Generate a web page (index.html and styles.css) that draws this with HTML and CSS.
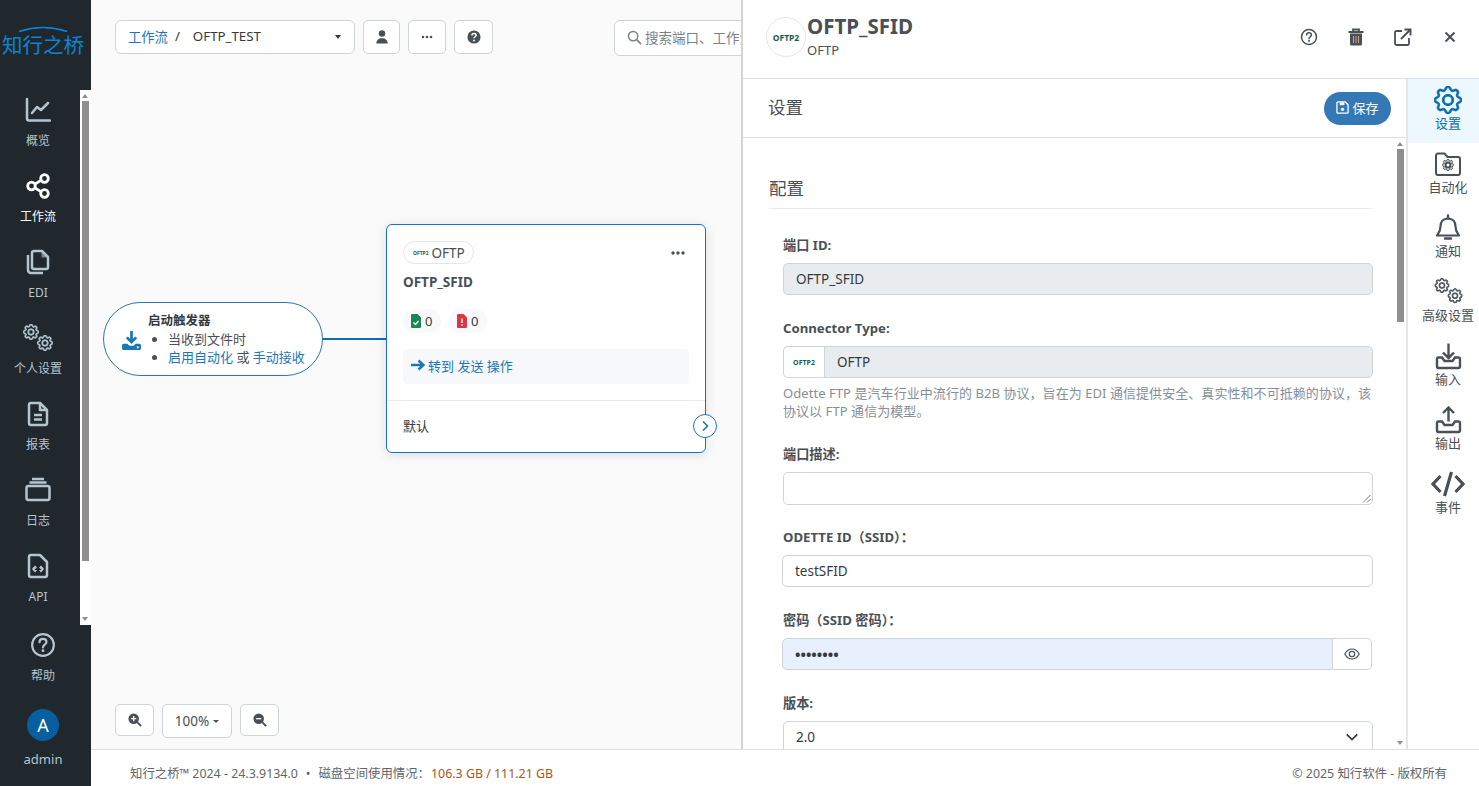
FILE: index.html
```html
<!DOCTYPE html>
<html lang="zh">
<head>
  <meta charset="UTF-8">
  <title>知行之桥 - 工作流</title>
  <link rel="stylesheet" href="styles.css">
</head>
<body>
  <svg class="sprite" xmlns="http://www.w3.org/2000/svg">
    <symbol id="i-gear" viewBox="0 0 16 16">
      <g class="gear-shape" fill="currentColor" stroke="currentColor">
        <path d="M8 4.754a3.246 3.246 0 1 0 0 6.492 3.246 3.246 0 0 0 0-6.492zM5.754 8a2.246 2.246 0 1 1 4.492 0 2.246 2.246 0 0 1-4.492 0z"/>
        <path d="M9.796 1.343c-.527-1.79-3.065-1.79-3.592 0l-.094.319a.873.873 0 0 1-1.255.52l-.292-.16c-1.64-.892-3.433.902-2.54 2.541l.159.292a.873.873 0 0 1-.52 1.255l-.319.094c-1.79.527-1.79 3.065 0 3.592l.319.094a.873.873 0 0 1 .52 1.255l-.16.292c-.892 1.64.901 3.434 2.541 2.54l.292-.159a.873.873 0 0 1 1.255.52l.094.319c.527 1.79 3.065 1.79 3.592 0l.094-.319a.873.873 0 0 1 1.255-.52l.292.16c1.64.893 3.434-.902 2.54-2.541l-.159-.292a.873.873 0 0 1 .52-1.255l.319-.094c1.79-.527 1.79-3.065 0-3.592l-.319-.094a.873.873 0 0 1-.52-1.255l.16-.292c.893-1.64-.902-3.433-2.541-2.54l-.292.159a.873.873 0 0 1-1.255-.52l-.094-.319zm-2.633.283c.246-.835 1.428-.835 1.674 0l.094.319a1.873 1.873 0 0 0 2.693 1.115l.291-.16c.764-.415 1.6.42 1.184 1.185l-.159.292a1.873 1.873 0 0 0 1.116 2.692l.318.094c.835.246.835 1.428 0 1.674l-.319.094a1.873 1.873 0 0 0-1.115 2.693l.16.291c.415.764-.42 1.6-1.185 1.184l-.291-.159a1.873 1.873 0 0 0-2.693 1.116l-.094.318c-.246.835-1.428.835-1.674 0l-.094-.319a1.873 1.873 0 0 0-2.692-1.115l-.292.16c-.764.415-1.6-.42-1.184-1.185l.159-.291A1.873 1.873 0 0 0 1.945 8.93l-.319-.094c-.835-.246-.835-1.428 0-1.674l.319-.094A1.873 1.873 0 0 0 3.06 4.377l-.16-.292c-.415-.764.42-1.6 1.185-1.184l.292.159a1.873 1.873 0 0 0 2.692-1.115l.094-.319z"/>
      </g>
    </symbol>
    <symbol id="i-gears" viewBox="0 0 30 30">
      <use href="#i-gear" x="0" y="0" width="16" height="16"/>
      <use href="#i-gear" x="14" y="11" width="16" height="16"/>
    </symbol>
    <symbol id="i-question" viewBox="0 0 24 24">
      <circle cx="12" cy="12" r="10" fill="none" stroke="currentColor" stroke-width="2"/>
      <path d="M8.8 9.4c0-1.9 1.4-3 3.2-3s3.200 1.100 3.200 2.800c0 2.500-3.200 2.500-3.200 5" fill="none" stroke="currentColor" stroke-width="2" stroke-linecap="round"/>
      <circle cx="12" cy="17.300" r="1.300" fill="currentColor"/>
    </symbol>
  </svg>

  <aside class="sidebar">
    <div class="logo">
      <svg class="logo-arc" viewBox="0 0 50 6"><path d="M1 5.500Q25 -2.500 49 5.500" fill="none" stroke="#0a84d6" stroke-width="1.600"/></svg>
      <span class="logo-text">知行之桥</span>
    </div>
    <div class="nav-scroll">
      <nav class="nav-list">
        <a class="nav-item">
          <svg class="nav-icon" viewBox="0 0 26 26"><path d="M2 2v19.500a2 2 0 0 0 2 2h21M7 16l5-6 4 3 7-7" fill="none" stroke="currentColor" stroke-width="2.500" stroke-linecap="round" stroke-linejoin="round"/></svg>
          <span>概览</span>
        </a>
        <a class="nav-item active">
          <svg class="nav-icon" viewBox="0 0 26 26"><g fill="none" stroke="currentColor" stroke-width="2.800"><circle cx="6.500" cy="13" r="3.800"/><circle cx="19.500" cy="5.500" r="3.800"/><circle cx="19.500" cy="20.500" r="3.800"/><path d="M10 11l6-3.600M10 15l6 3.600"/></g></svg>
          <span>工作流</span>
        </a>
        <a class="nav-item">
          <svg class="nav-icon" viewBox="0 0 26 26"><g fill="none" stroke="currentColor" stroke-width="2.500" stroke-linejoin="round"><path d="M9 2h8l6 6v10a2 2 0 0 1-2 2H9a2 2 0 0 1-2-2V4a2 2 0 0 1 2-2z"/><path d="M3 6v15a3 3 0 0 0 3 3h12"/></g><path d="M16.500 2.500v6h6" fill="currentColor" opacity=".6"/></svg>
          <span>EDI</span>
        </a>
        <a class="nav-item">
          <svg class="nav-icon nav-gears"><use href="#i-gears"/></svg>
          <span>个人设置</span>
        </a>
        <a class="nav-item">
          <svg class="nav-icon" viewBox="0 0 26 26"><g fill="none" stroke="currentColor" stroke-width="2.500" stroke-linejoin="round"><path d="M6 2h9l7 7v13a2 2 0 0 1-2 2H6a2 2 0 0 1-2-2V4a2 2 0 0 1 2-2z"/><path d="M15 2v7h7M9 14h8M9 18.500h8"/></g></svg>
          <span>报表</span>
        </a>
        <a class="nav-item">
          <svg class="nav-icon" viewBox="0 0 26 26"><g fill="none" stroke="currentColor" stroke-width="2.500" stroke-linejoin="round"><rect x="1.500" y="9" width="23" height="14" rx="2"/><path d="M4.500 5.500h17M7 2h12"/></g></svg>
          <span>日志</span>
        </a>
        <a class="nav-item">
          <svg class="nav-icon" viewBox="0 0 26 26"><g fill="none" stroke="currentColor" stroke-width="2.500" stroke-linejoin="round"><path d="M6 2h9l7 7v13a2 2 0 0 1-2 2H6a2 2 0 0 1-2-2V4a2 2 0 0 1 2-2z"/><path d="M11 13.500L8.500 16l2.500 2.500M15 13.500l2.500 2.500-2.500 2.500"/></g></svg>
          <span>API</span>
        </a>
      </nav>
      <div class="fake-scroll nav-bar">
        <i class="arrow-up"></i>
        <b class="thumb"></b>
        <i class="arrow-down"></i>
      </div>
    </div>
    <div class="nav-bottom">
      <a class="nav-item">
        <svg class="nav-icon"><use href="#i-question"/></svg>
        <span>帮助</span>
      </a>
      <a class="nav-item user-item">
        <span class="avatar">A</span>
        <span class="user-name">admin</span>
      </a>
    </div>
  </aside>

  <div class="main">
    <section class="canvas">
      <div class="toolbar">
        <div class="crumb">
          <a class="link">工作流</a><span class="crumb-sep">/</span><span>OFTP_TEST</span>
          <i class="caret crumb-caret"></i>
        </div>
        <button class="tool-btn btn-user">
          <svg width="14" height="14" viewBox="0 0 16 16"><circle cx="8" cy="4" r="3.700" fill="#495057"/><path d="M1.500 15.500c0-4 2.500-6.200 6.500-6.200s6.500 2.200 6.500 6.200z" fill="#495057"/></svg>
        </button>
        <button class="tool-btn btn-more">
          <svg width="12" height="12" viewBox="0 0 12 12"><g fill="#495057"><circle cx="2" cy="6" r="1.300"/><circle cx="6" cy="6" r="1.300"/><circle cx="10" cy="6" r="1.300"/></g></svg>
        </button>
        <button class="tool-btn btn-help">
          <svg width="14" height="14" viewBox="0 0 16 16"><circle cx="8" cy="8" r="7.500" fill="#495057"/><path d="M5.600 6.200C5.600 4.800 6.600 4 8 4s2.400.8 2.400 2c0 1.700-2.400 1.700-2.400 3.500" fill="none" stroke="#fff" stroke-width="1.700"/><circle cx="8" cy="12" r="1.100" fill="#fff"/></svg>
        </button>
        <div class="search">
          <svg width="15" height="15" viewBox="0 0 16 16"><circle cx="6.500" cy="6.500" r="5" fill="none" stroke="#7b8188" stroke-width="1.600"/><path d="M10.300 10.300L15 15" stroke="#7b8188" stroke-width="1.800"/></svg>
          <span>搜索端口、工作流</span>
        </div>
      </div>

      <div class="trigger">
        <svg class="trigger-icon" width="21" height="21" viewBox="0 0 20 20"><path d="M10 1v10M5.500 7L10 11.500 14.500 7" fill="none" stroke="#1a78b8" stroke-width="2.600"/><path d="M1 14.500q0-1.500 1.500-1.500h3.500l2 2h4l2-2h3.500q1.500 0 1.500 1.500v3q0 1.500-1.500 1.500h-15Q1 19 1 17.500z" fill="#1a78b8"/><circle cx="16" cy="16.500" r="1" fill="#fff"/></svg>
        <div>
          <div class="trigger-title">启动触发器</div>
          <ul class="trigger-list">
            <li>当收到文件时</li>
            <li><a class="link">启用自动化</a> 或 <a class="link">手动接收</a></li>
          </ul>
        </div>
      </div>
      <div class="edge"></div>

      <div class="node">
        <div class="node-top">
          <div class="node-head">
            <span class="badge"><span class="oftp-logo tiny">OFTP2</span>OFTP</span>
            <svg width="14" height="14" viewBox="0 0 14 14"><g fill="#495057"><circle cx="2" cy="7" r="1.700"/><circle cx="7" cy="7" r="1.700"/><circle cx="12" cy="7" r="1.700"/></g></svg>
          </div>
          <div class="node-name">OFTP_SFID</div>
          <div class="counts">
            <span class="count">
              <svg width="10" height="14" viewBox="0 0 10 14"><path d="M1 0h5.500L10 3.500V13a1 1 0 0 1-1 1H1a1 1 0 0 1-1-1V1a1 1 0 0 1 1-1z" fill="#198754"/><path d="M2.500 8.500l2 2 3-3.500" fill="none" stroke="#fff" stroke-width="1.300"/></svg>0
            </span>
            <span class="count">
              <svg width="10" height="14" viewBox="0 0 10 14"><path d="M1 0h5.500L10 3.500V13a1 1 0 0 1-1 1H1a1 1 0 0 1-1-1V1a1 1 0 0 1 1-1z" fill="#dc3545"/><path d="M5 4.500v4.500M5 10.300v1.500" stroke="#fff" stroke-width="1.400"/></svg>0
            </span>
          </div>
          <div class="node-action">
            <svg width="14" height="12" viewBox="0 0 14 12"><path d="M0 6h11M7.500 1.500L12.500 6l-5 4.500" fill="none" stroke="#1a78b8" stroke-width="2.400"/></svg>
            <a class="link">转到 发送 操作</a>
          </div>
        </div>
        <div class="node-foot">默认</div>
        <span class="node-port">
          <svg width="10" height="12" viewBox="0 0 10 12"><path d="M3 1.500L7.500 6 3 10.500" fill="none" stroke="#1a78b8" stroke-width="1.600"/></svg>
        </span>
      </div>

      <div class="zoom-bar">
        <button class="tool-btn zoom-btn">
          <svg width="14" height="14" viewBox="0 0 16 16"><circle cx="6.500" cy="6.500" r="6" fill="#495057"/><path d="M10.500 10.500L15 15" stroke="#495057" stroke-width="2.200"/><path d="M3.500 6.500h6M6.500 3.500v6" stroke="#fff" stroke-width="1.500"/></svg>
        </button>
        <button class="tool-btn zoom-pct">100%<i class="caret small"></i></button>
        <button class="tool-btn zoom-btn">
          <svg width="14" height="14" viewBox="0 0 16 16"><circle cx="6.500" cy="6.500" r="6" fill="#495057"/><path d="M10.500 10.500L15 15" stroke="#495057" stroke-width="2.200"/><path d="M3.500 6.500h6" stroke="#fff" stroke-width="1.500"/></svg>
        </button>
      </div>

      <div class="panel">
        <header class="panel-head">
          <span class="panel-logo"><span class="oftp-logo">OFTP2</span></span>
          <div class="panel-titles">
            <h1>OFTP_SFID</h1>
            <p>OFTP</p>
          </div>
          <div class="panel-actions">
            <svg width="18" height="18"><use href="#i-question"/></svg>
            <svg width="18" height="18" viewBox="0 0 18 18"><path d="M1.500 4h15M6 3.500V1.500h6v2" fill="none" stroke="#495057" stroke-width="1.800"/><path d="M3 5.500h12V16a1.500 1.500 0 0 1-1.500 1.500h-9A1.500 1.500 0 0 1 3 16z" fill="#495057"/><path d="M6.500 8v7M9 8v7M11.500 8v7" stroke="#c4a77d" stroke-width="1"/></svg>
            <svg width="18" height="18" viewBox="0 0 18 18"><path d="M8 3H2.500A1.500 1.500 0 0 0 1 4.500v11A1.500 1.500 0 0 0 2.500 17h11a1.500 1.500 0 0 0 1.500-1.500V10" fill="none" stroke="#495057" stroke-width="1.800"/><path d="M7 11L16 2M10.500 1.500h6v6" fill="none" stroke="#495057" stroke-width="1.900"/></svg>
            <svg width="18" height="18" viewBox="0 0 18 18"><path d="M4.500 4.500l9 9M13.500 4.500l-9 9" stroke="#495057" stroke-width="2"/></svg>
          </div>
        </header>
        <div class="panel-body">
          <div class="panel-main">
            <div class="panel-bar">
              <h2>设置</h2>
              <button class="save-btn">
                <svg width="13" height="13" viewBox="0 0 14 14"><path d="M2 1h8l3 3v8a1 1 0 0 1-1 1H2a1 1 0 0 1-1-1V2a1 1 0 0 1 1-1z" fill="none" stroke="#fff" stroke-width="1.400"/><path d="M4 1.500h5v3H4z" fill="#fff"/><circle cx="7" cy="9" r="1.800" fill="#fff"/></svg>
                保存
              </button>
            </div>
            <div class="form-wrap">
              <form class="form">
                <h3>配置</h3>
                <div class="field first">
                  <label>端口 ID:</label>
                  <div class="input readonly">OFTP_SFID</div>
                </div>
                <div class="field with-help">
                  <label>Connector Type:</label>
                  <div class="input-group">
                    <span class="group-logo"><span class="oftp-logo small">OFTP2</span></span>
                    <div class="input readonly">OFTP</div>
                  </div>
                  <p class="help">Odette FTP 是汽车行业中流行的 B2B 协议，旨在为 EDI 通信提供安全、真实性和不可抵赖的协议，该协议以 FTP 通信为模型。</p>
                </div>
                <div class="field field-text">
                  <label>端口描述:</label>
                  <div class="input textarea">
                    <svg class="grip" width="9" height="9" viewBox="0 0 9 9"><path d="M8.500 1L1 8.500M8.500 5L5 8.500" stroke="#777" stroke-width="1"/></svg>
                  </div>
                </div>
                <div class="field">
                  <label>ODETTE ID（SSID）：</label>
                  <div class="input shifted">testSFID</div>
                </div>
                <div class="field">
                  <label>密码（SSID 密码）：</label>
                  <div class="input-group shifted">
                    <div class="input filled">••••••••</div>
                    <span class="eye-btn">
                      <svg width="16" height="16" viewBox="0 0 16 16"><path d="M.8 8S3.500 3 8 3s7.200 5 7.200 5-2.700 5-7.200 5S.8 8 .8 8z" fill="none" stroke="#495057" stroke-width="1.200"/><circle cx="8" cy="8" r="2.700" fill="none" stroke="#495057" stroke-width="1.200"/></svg>
                    </span>
                  </div>
                </div>
                <div class="field">
                  <label>版本:</label>
                  <div class="input select">
                    2.0
                    <svg width="14" height="14" viewBox="0 0 16 16"><path d="M2 5l6 6 6-6" fill="none" stroke="#343a40" stroke-width="2"/></svg>
                  </div>
                </div>
              </form>
              <div class="fake-scroll form-bar">
                <i class="arrow-up"></i>
                <b class="thumb"></b>
                <i class="arrow-down"></i>
              </div>
            </div>
          </div>
          <nav class="tabs">
            <a class="tab active"><svg width="28" height="28"><use href="#i-gear"/></svg><span>设置</span></a>
            <a class="tab">
              <svg width="28" height="26" viewBox="0 0 28 26"><path d="M2 4.500A2 2 0 0 1 4 2.500h6.500l3 3.500H24a2 2 0 0 1 2 2v14a2 2 0 0 1-2 2H4a2 2 0 0 1-2-2z" fill="none" stroke="currentColor" stroke-width="2"/><use href="#i-gear" x="8" y="8" width="12" height="12"/><circle cx="14" cy="14" r="3.500" fill="currentColor"/><circle cx="14" cy="14" r="1.500" fill="#fff"/></svg>
              <span>自动化</span>
            </a>
            <a class="tab">
              <svg width="26" height="27" viewBox="0 0 26 27"><path d="M13 4c-5 0-7.500 3.500-7.500 8 0 5-2 7-3.500 9h22c-1.500-2-3.500-4-3.500-9 0-4.500-2.500-8-7.500-8z" fill="none" stroke="currentColor" stroke-width="2.200" stroke-linejoin="round"/><path d="M13 1v3M10 24h6" stroke="currentColor" stroke-width="2.400" stroke-linecap="round"/></svg>
              <span>通知</span>
            </a>
            <a class="tab tab-gears"><svg width="33" height="30"><use href="#i-gears"/></svg><span>高级设置</span></a>
            <a class="tab">
              <svg width="27" height="27" viewBox="0 0 27 27"><path d="M13.500 1v14M8 10l5.500 5.500L19 10" fill="none" stroke="currentColor" stroke-width="2.400"/><path d="M7 15H3.500A1.500 1.500 0 0 0 2 16.500V24a1.500 1.500 0 0 0 1.500 1.500h20A1.500 1.500 0 0 0 25 24v-7.500a1.500 1.500 0 0 0-1.500-1.500H20l-2.500 3.500h-8z" fill="none" stroke="currentColor" stroke-width="2.400"/></svg>
              <span>输入</span>
            </a>
            <a class="tab">
              <svg width="27" height="27" viewBox="0 0 27 27"><path d="M13.500 15V1M8 6.500L13.500 1 19 6.500" fill="none" stroke="currentColor" stroke-width="2.400"/><path d="M7 15H3.500A1.500 1.500 0 0 0 2 16.500V24a1.500 1.500 0 0 0 1.500 1.500h20A1.500 1.500 0 0 0 25 24v-7.500a1.500 1.500 0 0 0-1.500-1.500H20l-2.500 3.500h-8z" fill="none" stroke="currentColor" stroke-width="2.400"/></svg>
              <span>输出</span>
            </a>
            <a class="tab">
              <svg width="34" height="26" viewBox="0 0 34 26"><path d="M9.500 5L2 13l7.500 8M24.500 5L32 13l-7.500 8M20.500 1l-7 24" fill="none" stroke="currentColor" stroke-width="3.200"/></svg>
              <span>事件</span>
            </a>
          </nav>
        </div>
      </div>
    </section>

    <footer class="footer">
      <div>知行之桥™ 2024 - 24.3.9134.0<span class="dot">•</span>磁盘空间使用情况：<span class="disk">106.3 GB / 111.21 GB</span></div>
      <div>© 2025 知行软件 - 版权所有</div>
    </footer>
  </div>
</body>
</html>
```

FILE: styles.css
```css
* { margin: 0; padding: 0; box-sizing: border-box; }
html, body {
  width: 1479px;
  height: 786px;
  overflow: hidden;
  font-family: "Noto Sans", "Noto Sans CJK SC", sans-serif;
  font-size: 13px;
  color: #495057;
  background: #fff;
}
body { display: flex; }
.sprite { display: none; }
.link { color: #1a78b8; }
button { font-family: inherit; }
.gear-shape { stroke-width: var(--gear-weight, .35); }

/* sidebar */
.sidebar {
  flex: 0 0 91px;
  height: 786px;
  background: #20282d;
  display: flex;
  flex-direction: column;
  color: #b4c5d0;
}
.logo {
  position: relative;
  height: 90px;
  padding-top: 30px;
  text-align: center;
}
.logo-arc {
  position: absolute;
  left: 18px;
  top: 26px;
  width: 50px;
  height: 6px;
}
.logo-text {
  font-size: 20.500px;
  line-height: 30px;
  color: #0a84d6;
  white-space: nowrap;
  margin-left: -5px;
}
.nav-scroll {
  display: flex;
  height: 535px;
  overflow: hidden;
}
.nav-list { flex: 0 0 80px; padding: 6px 4px 0 0; }
.nav-item {
  display: flex;
  flex-direction: column;
  align-items: center;
  height: 76px;
  font-size: 12px;
  line-height: 18px;
}
.nav-item span { margin-top: 9px; }
.nav-item.active { color: #fff; }
.nav-icon { width: 26px; height: 26px; margin-top: 1px; }
.nav-gears { --gear-weight: .8; width: 32px; height: 30px; margin: 0 0 -3px; }

.fake-scroll {
  position: relative;
  flex: 0 0 11px;
  background: #fff;
}
.fake-scroll .thumb {
  position: absolute;
  left: 2px;
  width: 7px;
  background: #8f8f8f;
}
.nav-bar .thumb { top: 11px; height: 460px; }
.arrow-up, .arrow-down {
  position: absolute;
  left: 2px;
  width: 0;
  height: 0;
  border-left: 3.500px solid transparent;
  border-right: 3.500px solid transparent;
}
.arrow-up { top: 4px; border-bottom: 4px solid #8f8f8f; }
.arrow-down { bottom: 4px; border-top: 4px solid #8f8f8f; }

.nav-bottom { padding: 6px 5px 0 0; }
.nav-bottom .nav-item { height: 69px; }
.nav-bottom .nav-item span { margin-top: 9px; }
.nav-bottom .user-item { height: auto; }
.nav-bottom .avatar {
  width: 32px;
  height: 32px;
  margin-top: 0;
  border-radius: 50%;
  background: #065f9e;
  color: #fff;
  font-size: 18px;
  line-height: 32px;
  text-align: center;
}
.nav-bottom .user-name { margin-top: 9px; font-size: 13px; }

/* main */
.main {
  flex: 1;
  min-width: 0;
  display: flex;
  flex-direction: column;
}
.canvas {
  position: relative;
  height: 749px;
  background: #fafafa;
  overflow: hidden;
}
.footer {
  height: 37px;
  border-top: 1px solid #e0e0e0;
  display: flex;
  justify-content: space-between;
  align-items: center;
  padding: 9px 32px 0 39px;
  font-size: 12.400px;
  color: #5f666d;
  background: #fff;
}
.footer .dot { margin: 0 8px; }
.disk { color: #a8551e; margin-left: 1px; }

/* toolbar */
.toolbar {
  display: flex;
  align-items: flex-start;
  gap: 8px;
  padding: 20px 0 0 24px;
}
.crumb {
  display: flex;
  align-items: center;
  width: 240px;
  height: 34px;
  padding: 0 12px 2px;
  font-size: 13.300px;
  color: #343a40;
  background: #fff;
  border: 1px solid #ced4da;
  border-radius: 6px;
}
.crumb-sep { margin: 0 13px 0 7px; }
.crumb-caret { margin: 2px 1px 0 auto; }
.caret {
  display: inline-block;
  border-top: 4px solid #343a40;
  border-left: 3.500px solid transparent;
  border-right: 3.500px solid transparent;
}
.caret.small { margin-left: 4px; vertical-align: 2px; border-top-color: #495057; border-width: 3px 3px 0; }
.tool-btn {
  display: flex;
  align-items: center;
  justify-content: center;
  height: 34px;
  background: #fff;
  border: 1px solid #ced4da;
  border-radius: 5px;
  color: #495057;
  font-size: 13.500px;
}
.btn-user { width: 37px; }
.btn-more { width: 38px; }
.btn-help { width: 39px; }
.search {
  display: flex;
  align-items: center;
  gap: 3px;
  width: 300px;
  height: 36px;
  margin-left: 113px;
  padding: 0 0 2px 12px;
  font-size: 13.500px;
  color: #7b8188;
  white-space: nowrap;
  background: #fff;
  border: 1px solid #ced4da;
  border-radius: 6px;
}

/* flow nodes */
.trigger {
  position: absolute;
  left: 12px;
  top: 302px;
  display: flex;
  align-items: center;
  gap: 6px;
  width: 220px;
  height: 74px;
  padding-left: 17px;
  background: #fff;
  border: 1px solid #2a78b0;
  border-radius: 37px;
}
.trigger-icon { margin-top: 2px; }
.trigger-title { font-weight: 700; font-size: 12.500px; line-height: 18px; color: #343a40; }
.trigger-list { list-style: disc; padding-left: 20px; font-size: 13px; line-height: 18px; white-space: nowrap; }
.edge {
  position: absolute;
  left: 232px;
  top: 338px;
  width: 64px;
  height: 2px;
  background: #0f6cb5;
}
.node {
  position: absolute;
  left: 295px;
  top: 224px;
  width: 320px;
  height: 229px;
  background: #fff;
  border: 1px solid #1a73ba;
  border-radius: 6px;
  box-shadow: 0 2px 12px rgba(0,0,0,.12);
}
.node-top {
  height: 176px;
  padding: 16px 16px 0;
  border-bottom: 1px solid #e9ecef;
}
.node-head {
  display: flex;
  justify-content: space-between;
  align-items: center;
  padding-right: 4px;
}
.badge {
  display: flex;
  align-items: center;
  gap: 3px;
  height: 23px;
  padding: 0 8px 0 9px;
  font-size: 13.500px;
  border: 1px solid #e3e6e8;
  border-radius: 12px;
}
.oftp-logo {
  color: #14624e;
  font-weight: 700;
  font-size: 8.500px;
  white-space: nowrap;
}
.oftp-logo.tiny { font-size: 5px; }
.oftp-logo.small { font-size: 7px; }
.node-name {
  margin-top: 8px;
  font-size: 13.500px;
  font-weight: 700;
  line-height: 20px;
}
.counts { display: flex; gap: 8px; margin-top: 17px; }
.count {
  display: flex;
  align-items: center;
  gap: 4px;
  width: 38px;
  height: 24px;
  padding-left: 8px;
  font-size: 13px;
  color: #343a40;
  background: #f7f9fa;
  border-radius: 12px;
}
.node-action {
  display: flex;
  align-items: center;
  gap: 3px;
  height: 35px;
  margin-top: 16px;
  padding: 0 0 3px 8px;
  background: #f6f8fa;
  border-radius: 4px;
}
.node-foot {
  padding: 15px 16px 0;
  font-size: 13px;
  line-height: 20px;
  color: #343a40;
}
.node-port {
  position: absolute;
  right: -12px;
  top: 189px;
  display: flex;
  align-items: center;
  justify-content: center;
  width: 24px;
  height: 24px;
  background: #fff;
  border: 1px solid #1a78b8;
  border-radius: 50%;
}
.zoom-bar {
  position: absolute;
  left: 24px;
  top: 704px;
  display: flex;
  align-items: flex-start;
  gap: 8px;
}
.zoom-btn { width: 39px; height: 32px; }
.zoom-pct { width: 70px; }

/* side panel */
.panel {
  position: absolute;
  left: 650px;
  top: 0;
  right: 0;
  bottom: 0;
  display: flex;
  flex-direction: column;
  background: #fff;
  border-left: 2px solid #d4d4d4;
}
.panel-head {
  display: flex;
  align-items: center;
  height: 79px;
  padding: 0 20px 4px 23px;
  border-bottom: 1px solid #dee2e6;
}
.panel-logo {
  display: flex;
  align-items: center;
  justify-content: center;
  width: 40px;
  height: 40px;
  border: 1px solid #e3e6e8;
  border-radius: 50%;
}
.panel-titles { margin-left: 1px; padding-bottom: 4px; }
.panel-titles h1 { font-size: 20.500px; line-height: 28px; font-weight: 700; }
.panel-titles p { font-size: 13px; line-height: 18px; margin-top: 1px; }
.panel-actions {
  display: flex;
  gap: 29px;
  margin-left: auto;
}
.panel-body { flex: 1; min-height: 0; display: flex; }
.panel-main {
  flex: 1;
  min-width: 0;
  display: flex;
  flex-direction: column;
  border-right: 2px solid #e4e6e8;
}
.panel-bar {
  display: flex;
  align-items: center;
  justify-content: space-between;
  flex: 0 0 59px;
  padding: 0 15px 0 25px;
  border-bottom: 1px solid #dee2e6;
}
.panel-bar h2 { font-size: 17.500px; font-weight: 400; padding-bottom: 4px; }
.save-btn {
  display: flex;
  align-items: center;
  justify-content: center;
  gap: 3px;
  width: 67px;
  height: 33px;
  padding-bottom: 1px;
  color: #fff;
  font-size: 13px;
  background: #3478b5;
  border: 0;
  border-radius: 17px;
}
.form-wrap { flex: 1; min-height: 0; display: flex; }
.form {
  flex: 1;
  min-width: 0;
  overflow: hidden;
  padding: 36px 0 0 26px;
}
.form h3 {
  width: 603px;
  height: 35px;
  font-size: 17.500px;
  font-weight: 400;
  line-height: 28px;
  border-bottom: 1px solid #e9ecef;
}
.field { width: 590px; margin: 0 0 23px 14px; }
.field.first { margin-top: 26px; }
.field.with-help { margin-bottom: 24px; }
.field.field-text { margin-bottom: 22px; }
.field label {
  display: block;
  margin-bottom: 8px;
  font-size: 13.200px;
  font-weight: 700;
  line-height: 20px;
}
.input {
  display: flex;
  align-items: center;
  height: 32px;
  padding: 0 12px;
  font-size: 13.500px;
  color: #343a40;
  background: #fff;
  border: 1px solid #ced4da;
  border-radius: 5px;
}
.input.readonly { background: #e9ecef; }
.input.textarea { position: relative; height: 33px; }
.grip { position: absolute; right: 1px; bottom: 1px; }
.shifted { margin-left: -1px; }
.input-group { display: flex; height: 32px; }
.input-group.shifted { margin-right: 1px; }
.group-logo {
  display: flex;
  align-items: center;
  justify-content: center;
  flex: 0 0 41px;
  background: #fff;
  border: 1px solid #ced4da;
  border-right: 0;
  border-radius: 5px 0 0 5px;
}
.input-group .input { flex: 1; border-radius: 0 5px 5px 0; }
.input-group .input.filled {
  background: #e8f0fe;
  border-radius: 5px 0 0 5px;
  font-size: 14.500px;
  font-weight: 700;
}
.eye-btn {
  display: flex;
  align-items: center;
  justify-content: center;
  flex: 0 0 39px;
  background: #fff;
  border: 1px solid #ced4da;
  border-left: 0;
  border-radius: 0 5px 5px 0;
}
.help {
  margin-top: 6px;
  font-size: 13px;
  line-height: 18px;
  letter-spacing: .06px;
  color: #868e96;
}
.input.select {
  justify-content: space-between;
  height: 36px;
  padding: 0 13px 4px 12px;
}
.form-bar { background: #fff; }
.form-bar .thumb { top: 11px; height: 173px; }

/* right tabs */
.tabs { flex: 0 0 71px; }
.tab {
  display: flex;
  flex-direction: column;
  align-items: center;
  justify-content: flex-start;
  height: 64px;
  padding: 7px 0 0 9px;
  font-size: 13px;
  line-height: 18px;
  color: #495057;
  white-space: nowrap;
}
.tab svg { height: 28px; }
.tab span { margin-top: 0; }
.tab-gears { --gear-weight: .8; }
.tab.active { --gear-weight: .5; color: #0a6cab; background: #edf7fe; }
```
